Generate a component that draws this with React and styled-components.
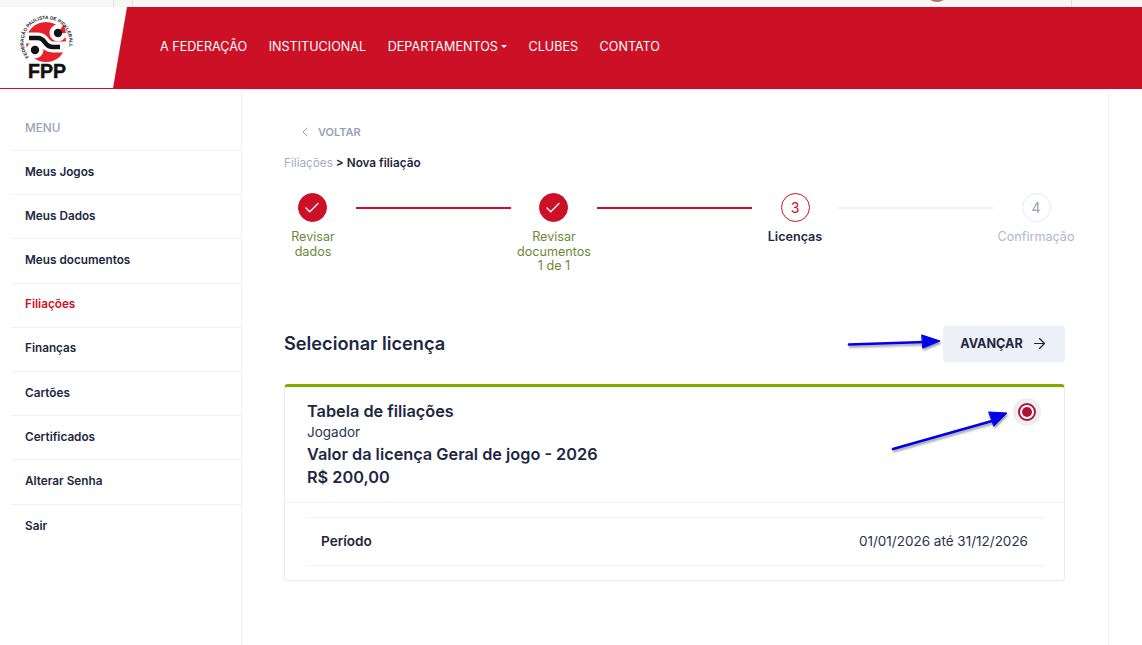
import React from "react";
import styled, { createGlobalStyle } from "styled-components";
import { Check, ChevronLeft, ArrowRight } from "lucide-react";

const Global = createGlobalStyle`
  html, body { margin: 0; padding: 0; background: #fff; }
  body { font-family: Inter, "Noto Sans", sans-serif; color: #1e2742; }
  * { box-sizing: border-box; }
`;
const Page = styled.div`
  position: relative; width: 1142px; height: 645px; overflow: hidden; background: #fff;
  display: flex; flex-direction: column;
`;
const TopStrip = styled.div`
  height: 7px; background: #f7f7f7; display: flex; flex: none; overflow: hidden;
`;
const StripCell = styled.div`
  width: ${p => p.$w}px; flex: none; height: 7px;
  border-right: ${p => (p.$line ? "1px solid #dedede" : "none")};
`;
const Avatar = styled.div`
  width: 24px; height: 24px; border-radius: 50%; background: #b9705a; margin-top: -22px; flex: none;
`;
const Header = styled.header`
  height: 82px; background: #cc1126; display: flex; align-items: flex-start; flex: none;
`;
const LogoBlock = styled.div`
  width: 127px; height: 81px; background: #fff; flex: none;
  clip-path: polygon(0 0, 127px 0, 113px 100%, 0 100%);
`;
const LogoSvg = styled.svg`display: block;`;
const Nav = styled.nav`
  display: flex; align-items: center; gap: 21.55px; height: 78px; margin-left: 33px;
`;
const NavItem = styled.a`
  color: #fff; font-size: 12.6px; font-weight: 400; white-space: nowrap; display: flex; align-items: center;
`;
const Caret = styled.span`
  display: inline-block; margin-left: 3px; margin-top: 1px; width: 0; height: 0;
  border-left: 3px solid transparent; border-right: 3px solid transparent; border-top: 3px solid #fff;
`;
const Body = styled.div`display: flex; flex: 1; min-height: 0;`;
const Sidebar = styled.aside`
  width: 242px; flex: none; padding: 0 0 0 11px; border-right: 1px solid #edf0f6;
`;
const MenuTitle = styled.div`
  height: 62px; padding: 32px 0 0 14px; font-size: 11.76px; font-weight: 500; color: #98a2bd; line-height: 14px;
  border-bottom: 1px solid #edf0f6; 
`;
const MenuItem = styled.a`
  display: flex; align-items: center; height: 44.2px; padding: 0 0 1.8px 14px; font-size: 11.76px; font-weight: 600;
  color: ${p => (p.$active ? "#cc1126" : "#1e2742")};
  border-bottom: ${p => (p.$last ? "none" : "1px solid #edf0f6")};
`;
const Main = styled.main`
  width: 867px; flex: none; padding: 35px 43px 0 42px; border-right: 1px solid #edf0f6;
  border-top: 1px solid #edf0f6; border-top-right-radius: 4px;
`;
const Back = styled.a`
  display: flex; align-items: center; gap: 5px; padding-left: 13px; height: 14px;
  font-size: 11px; font-weight: 600; color: #98a2bd;
`;
const Crumbs = styled.div`
  margin-top: 17px; font-size: 11.76px; line-height: 15px; font-weight: 600; color: #1e2742; white-space: nowrap;
`;
const CrumbLink = styled.span`font-weight: 400; color: #a4adc4;`;
const Stepper = styled.div`display: flex; align-items: flex-start; margin-top: 22px;`;
const Step = styled.div`
  width: 58px; flex: none; display: flex; flex-direction: column; align-items: center;
`;
const Dot = styled.div`
  width: 29px; height: 29px; border-radius: 50%; display: flex; align-items: center; justify-content: center;
  font-size: 14px; flex: none;
  margin-left: ${p => (p.$state === "done" ? "-2px" : "0")};
  background: ${p => (p.$state === "done" ? "#cc1126" : "#fff")};
  color: ${p => (p.$state === "done" ? "#fff" : p.$state === "current" ? "#cc1126" : "#98a2bd")};
  border: 1px solid ${p => (p.$state === "done" || p.$state === "current" ? "#cc1126" : "#e6e9f2")};
`;
const StepLabel = styled.div`
  margin-top: 8px; width: max-content; text-align: center; white-space: pre-line; font-size: 12.6px; line-height: 14.5px;
  font-weight: ${p => (p.$state === "current" ? 600 : 400)};
  color: ${p => (p.$state === "done" ? "#6b8a35" : p.$state === "current" ? "#1e2742" : "#aeb6cb")};
`;
const Connector = styled.div`
  flex: 1; height: 2px; margin: 14px 14px 0;
  background: ${p => (p.$on ? "#cc1126" : "#edf0f6")};
`;
const SectionHead = styled.div`
  display: flex; justify-content: space-between; align-items: center; margin-top: 52px;
`;
const SectionTitle = styled.h2`margin: 0 0 2px; font-size: 18.2px; font-weight: 600; color: #1e2742;`;
const Advance = styled.button`
  width: 122px; height: 36px; border: 0; border-radius: 3px; background: #edf0f7; color: #1e2742;
  font-family: inherit; font-size: 12.6px; font-weight: 700; display: flex; align-items: center; justify-content: center; gap: 8px;
`;
const Card = styled.section`
  margin-top: 22px; height: 197px; border: 1px solid #e8ebf3; border-top: 3px solid #7fab00; border-radius: 4px;
`;
const CardTop = styled.div`
  height: 116px; padding: 13px 22px 0; display: flex; justify-content: space-between; border-bottom: 1px solid #edf0f6;
`;
const CardInfo = styled.div`display: flex; flex-direction: column;`;
const CardStrong = styled.div`
  font-size: 16.3px; font-weight: 600; line-height: 22.5px; color: #1e2742;
  margin-top: ${p => p.$gap || 0}px;
`;
const CardSub = styled.div`font-size: 13.5px; line-height: 19px; color: #2a3350; margin-top: 1px;`;
const RadioHalo = styled.div`
  width: 28px; height: 28px; border-radius: 50%; background: #ecedf2; display: flex; align-items: center; justify-content: center;
  margin: -2px 1px 0 0; flex: none;
`;
const RadioRing = styled.div`
  width: 18px; height: 18px; border-radius: 50%; background: #fff; border: 2px solid #b0123b;
  display: flex; align-items: center; justify-content: center;
`;
const RadioDot = styled.div`width: 10px; height: 10px; border-radius: 50%; background: #aa1238;`;
const CardBottom = styled.div`padding: 14px 21px 0 22px;`;
const Row = styled.div`
  height: 49px; display: flex; justify-content: space-between; align-items: center; padding: 0 15px 1px 14px; font-size: 13.5px;
  border-top: 1px solid #edf0f6; border-bottom: 1px solid #edf0f6;
`;
const RowKey = styled.span`font-weight: 600; color: #1e2742; font-size: 13.6px;`;
const RowVal = styled.span`font-weight: 400; color: #2a3350;`;
const Overlay = styled.svg`position: absolute; left: 0; top: 0; pointer-events: none;`;

function Logo() {
  return (
    <LogoSvg width="127" height="81" viewBox="0 7 127 81">
      <defs>
        <path id="ringText" d="M 28.9 56.8 A 23 23 0 1 1 64.1 56.8" fill="none" />
      </defs>
      <circle cx="46" cy="42" r="20" fill="#e8202a" />
      <path d="M26 38 H38 Q42 38 45 42.5 Q48 47 53 47 H66" fill="none" stroke="#fff" strokeWidth="11" />
      <circle cx="58" cy="33" r="8.5" fill="#fff" />
      <circle cx="35" cy="50" r="8.5" fill="#fff" />
      <path d="M64 24 L66 33 L58 33 Z" fill="#e8202a" />
      <path d="M29 38 H38 Q42 38 45 42.5 Q48 47 53 47 H60" fill="none" stroke="#111" strokeWidth="4.6" />
      <circle cx="58" cy="33" r="4.2" fill="#111" />
      <circle cx="35" cy="50" r="4.2" fill="#111" />
      <text fontFamily="Liberation Sans, sans-serif" fontSize="4.7" fontWeight="700" fill="#111">
        <textPath href="#ringText" startOffset="0">FEDERAÇÃO PAULISTA DE PICKLEBALL</textPath>
      </text>
      <text x="47" y="78" textAnchor="middle" fontFamily="Liberation Sans, sans-serif" fontSize="19.5" fontWeight="700" fill="#111" stroke="#111" strokeWidth=".5">FPP</text>
    </LogoSvg>
  );
}

const menu = ["Meus Jogos", "Meus Dados", "Meus documentos", "Filiações", "Finanças", "Cartões", "Certificados", "Alterar Senha", "Sair"];
const steps = [
  { state: "done", label: "Revisar\ndados" },
  { state: "done", label: "Revisar\ndocumentos\n1 de 1" },
  { state: "current", n: 3, label: "Licenças" },
  { state: "todo", n: 4, label: "Confirmação" },
];

export default function App() {
  return (
    <Page>
      <Global />
      <TopStrip>
        <StripCell $w={114} $line />
        <StripCell $w={19} $line />
        <StripCell $w={792} />
        <Avatar />
        <StripCell $w={123} $line />
      </TopStrip>
      <Header>
        <LogoBlock><Logo /></LogoBlock>
        <Nav>
          <NavItem>A FEDERAÇÃO</NavItem>
          <NavItem>INSTITUCIONAL</NavItem>
          <NavItem>DEPARTAMENTOS<Caret /></NavItem>
          <NavItem>CLUBES</NavItem>
          <NavItem>CONTATO</NavItem>
        </Nav>
      </Header>
      <Body>
        <Sidebar>
          <MenuTitle>MENU</MenuTitle>
          {menu.map((m, i) => (
            <MenuItem key={m} $active={m === "Filiações"} $last={i === menu.length - 1}>{m}</MenuItem>
          ))}
        </Sidebar>
        <Main>
          <Back><ChevronLeft size={16} strokeWidth={1.5} />VOLTAR</Back>
          <Crumbs><CrumbLink>Filiações</CrumbLink> &gt; Nova filiação</Crumbs>
          <Stepper>
            {steps.map((s, i) => (
              <React.Fragment key={s.label}>
                <Step>
                  <Dot $state={s.state}>{s.state === "done" ? <Check size={18} strokeWidth={1.75} /> : s.n}</Dot>
                  <StepLabel $state={s.state}>{s.label}</StepLabel>
                </Step>
                {i < steps.length - 1 && <Connector $on={i < 2} />}
              </React.Fragment>
            ))}
          </Stepper>
          <SectionHead>
            <SectionTitle>Selecionar licença</SectionTitle>
            <Advance>AVANÇAR<ArrowRight size={17} strokeWidth={1.75} /></Advance>
          </SectionHead>
          <Card>
            <CardTop>
              <CardInfo>
                <CardStrong>Tabela de filiações</CardStrong>
                <CardSub>Jogador</CardSub>
                <CardStrong $gap={1}>Valor da licença Geral de jogo - 2026</CardStrong>
                <CardStrong>R$ 200,00</CardStrong>
              </CardInfo>
              <RadioHalo><RadioRing><RadioDot /></RadioRing></RadioHalo>
            </CardTop>
            <CardBottom>
              <Row><RowKey>Período</RowKey><RowVal>01/01/2026 até 31/12/2026</RowVal></Row>
            </CardBottom>
          </Card>
        </Main>
      </Body>
      <Overlay width="1142" height="645" viewBox="0 0 1142 645">
        <defs>
          <filter id="sh" x="-20%" y="-50%" width="140%" height="200%">
            <feDropShadow dx="1" dy="2" stdDeviation="1.2" floodColor="#000" floodOpacity=".4" />
          </filter>
        </defs>
        <g filter="url(#sh)" fill="#0000e8" stroke="#0000e8" strokeLinecap="round" strokeLinejoin="round">
          <path d="M849 344.5 L925 342" strokeWidth="2.6" fill="none" />
          <path d="M922 335 L940 341 L923 348 Z" strokeWidth="1" />
          <path d="M893 449 L992 421" strokeWidth="2.6" fill="none" />
          <path d="M989 412 L1007 413 L994 426 Z" strokeWidth="1" />
        </g>
      </Overlay>
    </Page>
  );
}
